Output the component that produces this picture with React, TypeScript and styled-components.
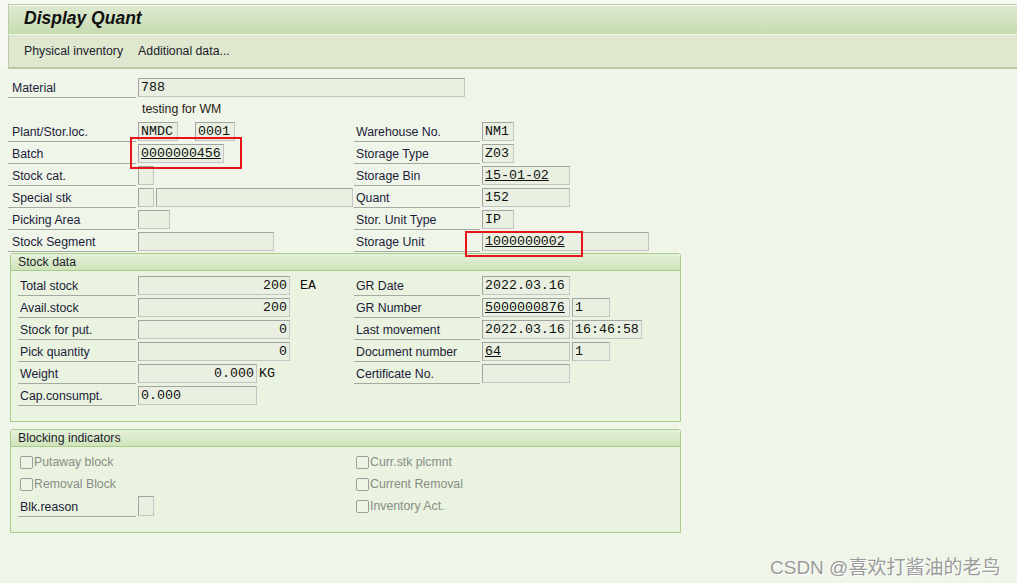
import React from "react";
import styled, { createGlobalStyle } from "styled-components";

const GlobalStyle = createGlobalStyle`
  html, body {
    margin: 0;
    padding: 0;
    background: #eff5e9;
  }
`;

const Page = styled.div`
  position: relative;
  width: 1017px;
  height: 583px;
  overflow: hidden;
  background: #eff5e9;
  font-family: "Liberation Sans", Arial, sans-serif;
  font-size: 12.3px;
  color: #1c1c3a;
`;

const Header = styled.div`
  background: #f5f8f1;
  padding: 4px 0 0 8px;
`;

const TitleBar = styled.div`
  height: 29px;
  display: flex;
  align-items: center;
  padding-left: 15px;
  border-top: 1px solid #b9cda6;
  border-left: 1px solid #b9cda6;
  box-shadow: inset 0 1px 0 #f4f8ee;
  background: linear-gradient(#dfe9d1, #c6dcb0);
  border-bottom: 1px solid #f2f6ec;
`;

const Title = styled.h1`
  margin: -2px 0 0;
  font-size: 17.5px;
  font-weight: bold;
  font-style: italic;
  color: #101010;
`;

const Toolbar = styled.div`
  height: 32px;
  display: flex;
  align-items: center;
  gap: 15px;
  padding-left: 15px;
  background: #dfe8cf;
  border-left: 1px solid #b9cda6;
  border-bottom: 2px solid #b7cba2;
`;

const ToolItem = styled.span`
  color: #1c1c2c;
`;

const Content = styled.div`
  padding: 7px 0 0 8px;
`;

const Form = styled.div<{ $left: number }>`
  display: grid;
  grid-template-columns: ${(p) => p.$left}px 1fr;
`;

const Row = styled.div`
  height: 22px;
  display: flex;
  align-items: center;
  gap: 2px;
`;

const Label = styled.div<{ $w: number; $pad?: number }>`
  width: ${(p) => p.$w}px;
  height: 21px;
  line-height: 22px;
  box-sizing: border-box;
  padding-left: ${(p) => p.$pad ?? 4}px;
  border-bottom: 1px solid #a4aaa0;
  white-space: nowrap;
  flex-shrink: 0;
`;

const Box = styled.div<{ $w: number; $h?: number; $right?: boolean; $u?: boolean }>`
  width: ${(p) => p.$w}px;
  height: ${(p) => p.$h ?? 19}px;
  box-sizing: border-box;
  flex-shrink: 0;
  border: 1px solid #a3a3a3;
  border-right-color: #c4c4c4;
  border-bottom-color: #c4c4c4;
  background: #e9f0e1;
  font-family: "Liberation Mono", "Courier New", monospace;
  font-size: 13.3px;
  line-height: 17px;
  padding: 0 2px;
  text-align: ${(p) => (p.$right ? "right" : "left")};
  text-decoration: ${(p) => (p.$u ? "underline" : "none")};
  color: #111;
  white-space: nowrap;
  overflow: hidden;
`;

const Unit = styled.span<{ $gap: number }>`
  font-family: "Liberation Mono", "Courier New", monospace;
  font-size: 13.3px;
  color: #111;
  margin-left: ${(p) => p.$gap}px;
`;

const Note = styled.div`
  height: 22px;
  line-height: 22px;
  padding-left: 134px;
  color: #2a1c10;
`;

const Spacer = styled.div<{ $w: number }>`
  width: ${(p) => p.$w}px;
  flex-shrink: 0;
`;

const Mark = styled.div`
  position: relative;
`;

const RedBox = styled.div<{ $l: number; $t: number; $w: number; $h: number }>`
  position: absolute;
  left: ${(p) => p.$l}px;
  top: ${(p) => p.$t}px;
  width: ${(p) => p.$w}px;
  height: ${(p) => p.$h}px;
  border: 2px solid #e8141a;
  pointer-events: none;
`;

const Group = styled.div<{ $mt: number }>`
  margin: ${(p) => p.$mt}px 0 0 2px;
  width: 671px;
  box-sizing: border-box;
  border: 1px solid #a9cc8b;
  border-radius: 3px 3px 0 0;
  background: #e9f3df;
  padding-bottom: 15px;
`;

const GroupHead = styled.div`
  height: 16px;
  line-height: 16px;
  padding-left: 7px;
  background: linear-gradient(#e6f0da, #cfe4ba);
  border-bottom: 1px solid #a9cc8b;
  color: #1c1c2c;
  margin-bottom: 3px;
`;

const GroupBody = styled.div<{ $pt?: number }>`
  padding: ${(p) => p.$pt ?? 0}px 0 0 7px;
`;

const Check = styled.label`
  display: flex;
  align-items: center;
  height: 22px;
  color: #8a8c88;
  gap: 1px;
`;

const CheckBox = styled.span`
  width: 11px;
  height: 11px;
  border: 1px solid #9c9e9a;
  border-radius: 2px;
  margin-left: 2px;
  background: #edf4e5;
`;

const Watermark = styled.div`
  position: absolute;
  left: 770px;
  top: 552px;
  font-family: "Liberation Sans", "Noto Sans CJK SC", sans-serif;
  font-size: 19px;
  color: #9b9b9b;
  text-shadow: 1px 1px 0 #ffffff;
`;

type F = {
  label: string;
  boxes: { w: number; v?: string; right?: boolean; u?: boolean; gap?: number }[];
  unit?: string;
  unitGap?: number;
};

const Field: React.FC<F & { lw: number; pad?: number }> = ({ label, boxes, unit, unitGap = 8, lw, pad }) => (
  <Row>
    <Label $w={lw} $pad={pad}>{label}</Label>
    {boxes.map((b, i) => (
      <React.Fragment key={i}>
        {b.gap ? <Spacer $w={b.gap} /> : null}
        <Box $w={b.w} $right={b.right} $u={b.u}>
          {b.v}
        </Box>
      </React.Fragment>
    ))}
    {unit ? <Unit $gap={unitGap}>{unit}</Unit> : null}
  </Row>
);

const CheckItem: React.FC<{ text: string }> = ({ text }) => (
  <Check>
    <CheckBox />
    {text}
  </Check>
);

export default function App() {
  return (
    <Page>
      <GlobalStyle />
      <Header>
        <TitleBar>
          <Title>Display Quant</Title>
        </TitleBar>
        <Toolbar>
          <ToolItem>Physical inventory</ToolItem>
          <ToolItem>Additional data...</ToolItem>
        </Toolbar>
      </Header>
      <Content>
        <Mark>
          <Row>
            <Label $w={128}>Material</Label>
            <Box $w={327}>788</Box>
          </Row>
          <Note>testing for WM</Note>
          <Form $left={346}>
            <Field lw={128} label="Plant/Stor.loc." boxes={[{ w: 40, v: "NMDC" }, { w: 40, v: "0001", gap: 13 }]} />
            <Field lw={126} pad={2} label="Warehouse No." boxes={[{ w: 32, v: "NM1" }]} />
            <Field lw={128} label="Batch" boxes={[{ w: 86, v: "0000000456", u: true }]} />
            <Field lw={126} pad={2} label="Storage Type" boxes={[{ w: 32, v: "Z03" }]} />
            <Field lw={128} label="Stock cat." boxes={[{ w: 16 }]} />
            <Field lw={126} pad={2} label="Storage Bin" boxes={[{ w: 88, v: "15-01-02", u: true }]} />
            <Field lw={128} label="Special stk" boxes={[{ w: 16 }, { w: 197 }]} />
            <Field lw={126} pad={2} label="Quant" boxes={[{ w: 88, v: "152" }]} />
            <Field lw={128} label="Picking Area" boxes={[{ w: 32 }]} />
            <Field lw={126} pad={2} label="Stor. Unit Type" boxes={[{ w: 32, v: "IP" }]} />
            <Field lw={128} label="Stock Segment" boxes={[{ w: 136 }]} />
            <Field lw={126} pad={2} label="Storage Unit" boxes={[{ w: 167, v: "1000000002", u: true }]} />
          </Form>
          <RedBox $l={122} $t={61} $w={108} $h={28} />
          <RedBox $l={457} $t={155} $w={114} $h={22} />
        </Mark>

        <Group $mt={1}>
          <GroupHead>Stock data</GroupHead>
          <GroupBody>
            <Form $left={336}>
              <Field lw={118} pad={2} label="Total stock" boxes={[{ w: 152, v: "200", right: true }]} unit="EA" />
              <Field lw={126} pad={2} label="GR Date" boxes={[{ w: 88, v: "2022.03.16" }]} />
              <Field lw={118} pad={2} label="Avail.stock" boxes={[{ w: 152, v: "200", right: true }]} />
              <Field lw={126} pad={2} label="GR Number" boxes={[{ w: 88, v: "5000000876", u: true }, { w: 38, v: "1" }]} />
              <Field lw={118} pad={2} label="Stock for put." boxes={[{ w: 152, v: "0", right: true }]} />
              <Field lw={126} pad={2} label="Last movement" boxes={[{ w: 88, v: "2022.03.16" }, { w: 70, v: "16:46:58" }]} />
              <Field lw={118} pad={2} label="Pick quantity" boxes={[{ w: 152, v: "0", right: true }]} />
              <Field lw={126} pad={2} label="Document number" boxes={[{ w: 88, v: "64", u: true }, { w: 38, v: "1" }]} />
              <Field lw={118} pad={2} label="Weight" boxes={[{ w: 119, v: "0.000", right: true }]} unit="KG" unitGap={0} />
              <Field lw={126} pad={2} label="Certificate No." boxes={[{ w: 88 }]} />
              <Field lw={118} pad={2} label="Cap.consumpt." boxes={[{ w: 119, v: "0.000" }]} />
              <div />
            </Form>
          </GroupBody>
        </Group>

        <Group $mt={7}>
          <GroupHead>Blocking indicators</GroupHead>
          <GroupBody $pt={1}>
            <Form $left={336}>
              <CheckItem text="Putaway block" />
              <CheckItem text="Curr.stk plcmnt" />
              <CheckItem text="Removal Block" />
              <CheckItem text="Current Removal" />
              <Row>
                <Label $w={118} $pad={2}>Blk.reason</Label>
                <Box $w={16} $h={20} />
              </Row>
              <CheckItem text="Inventory Act." />
            </Form>
          </GroupBody>
        </Group>
      </Content>
      <Watermark>CSDN @喜欢打酱油的老鸟</Watermark>
    </Page>
  );
}
